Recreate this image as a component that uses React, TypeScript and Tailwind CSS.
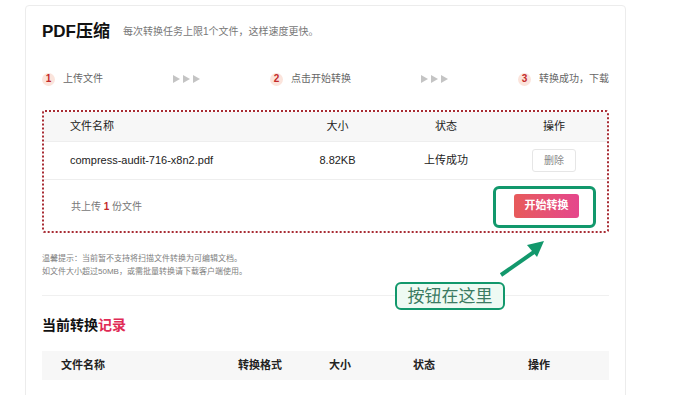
import React from "react";

const font = { fontFamily: '"Liberation Sans", "Noto Sans CJK SC", sans-serif' };

function Arrows() {
  return (
    <div className="flex items-center gap-[3px]">
      {[0, 1, 2].map((i) => (
        <svg key={i} width="7" height="8" viewBox="0 0 7 8">
          <path d="M0 0 L7 4 L0 8 Z" fill="#c4c4c4" />
        </svg>
      ))}
    </div>
  );
}

function Step({ n, label }: { n: string; label: string }) {
  return (
    <div className="flex items-center">
      <div className="w-[13px] h-[13px] rounded-full bg-[#fbe4dc] flex items-center justify-center text-[10px] font-bold text-[#c42a2a] leading-none">
        {n}
      </div>
      <span className="ml-[8px] text-[10px] text-[#666] leading-none">{label}</span>
    </div>
  );
}

export default function App() {
  return (
    <div className="w-[700px] h-[395px] bg-white overflow-hidden" style={font}>
      <div className="relative ml-[25px] mt-[5px] w-[601px] h-[420px] border border-[#ececec] rounded-[4px] px-[16px]">
        {/* Title */}
        <div className="flex items-center pt-[14px] h-[38px]">
          <span className="text-[17px] font-bold text-[#111] leading-[24px]">PDF压缩</span>
          <span className="ml-[13px] text-[10px] text-[#777] leading-[24px]">每次转换任务上限1个文件，这样速度更快。</span>
        </div>

        {/* Steps */}
        <div className="flex items-center justify-between h-[20px] mt-[25px]">
          <Step n="1" label="上传文件" />
          <Arrows />
          <Step n="2" label="点击开始转换" />
          <Arrows />
          <Step n="3" label="转换成功，下载" />
        </div>

        {/* Upload box */}
        <div className="mt-[21px] border-2 border-dotted border-[#a82c34] rounded-[3px]">
          <div className="grid grid-cols-[246px_95px_122px_94px] h-[30px] items-center bg-[#f7f7f7] text-[11px] text-[#222] border-b border-[#eeeeee]">
            <div className="pl-[26px]">文件名称</div>
            <div className="text-center">大小</div>
            <div className="text-center">状态</div>
            <div className="text-center">操作</div>
          </div>
          <div className="grid grid-cols-[246px_95px_122px_94px] h-[38px] items-center text-[11px] text-[#222] border-b border-[#eeeeee]">
            <div className="pl-[26px]">compress-audit-716-x8n2.pdf</div>
            <div className="text-center">8.82KB</div>
            <div className="text-center">上传成功</div>
            <div className="flex justify-center">
              <div className="w-[44px] h-[23px] border border-[#e6e6e6] rounded-[3px] flex items-center justify-center text-[10px] text-[#888]">
                删除
              </div>
            </div>
          </div>
          <div className="flex items-center justify-between h-[51px] pl-[27px] pr-[28px]">
            <div className="text-[10px] text-[#777] pt-[2px]">
              共上传 <span className="font-bold text-[#c42a2a]">1</span> 份文件
            </div>
            <div className="relative">
              <div className="w-[65px] h-[24px] rounded-[3px] bg-gradient-to-r from-[#e75a5a] to-[#e5468c] flex items-center justify-center text-[11px] font-bold text-white">
                开始转换
              </div>
              <div className="absolute left-[-21px] top-[-8px] w-[103px] h-[42px] border-[3px] border-[#12986c] rounded-[6px]" />
            </div>
          </div>
        </div>

        {/* Tips */}
        <div className="mt-[19px] text-[8px] leading-[13px] text-[#808080]">
          <div>温馨提示：当前暂不支持将扫描文件转换为可编辑文档。</div>
          <div>如文件大小超过50MB，或需批量转换请下载客户端使用。</div>
        </div>

        <div className="mt-[17px] h-px bg-[#f0f0f0]" />

        {/* Records */}
        <div className="mt-[19px] text-[14px] font-bold leading-[20px] text-[#111]">
          当前转换<span className="text-[#e02a55]">记录</span>
        </div>
        <div className="mt-[16px] grid grid-cols-[196px_91px_84px_115px_1fr] h-[29px] items-center bg-[#f7f7f7] text-[11px] font-semibold text-[#222]">
          <div className="pl-[19px]">文件名称</div>
          <div>转换格式</div>
          <div>大小</div>
          <div>状态</div>
          <div>操作</div>
        </div>

        {/* Annotation arrow */}
        <svg className="absolute left-[470px] top-[230px]" width="60" height="45" viewBox="0 0 60 45">
          <line x1="5" y1="39" x2="38" y2="16" stroke="#12986c" strokeWidth="4" />
          <path d="M48 5 L31 9 L41 21 Z" fill="#12986c" />
        </svg>

        {/* Annotation label */}
        <div className="absolute left-[369px] top-[276px] w-[110px] h-[28px] border-[2.5px] border-[#12986c] rounded-[6px] bg-[#eefaf3] flex items-center justify-center text-[17px] text-[#3b7a62] leading-none">
          按钮在这里
        </div>
      </div>
    </div>
  );
}
